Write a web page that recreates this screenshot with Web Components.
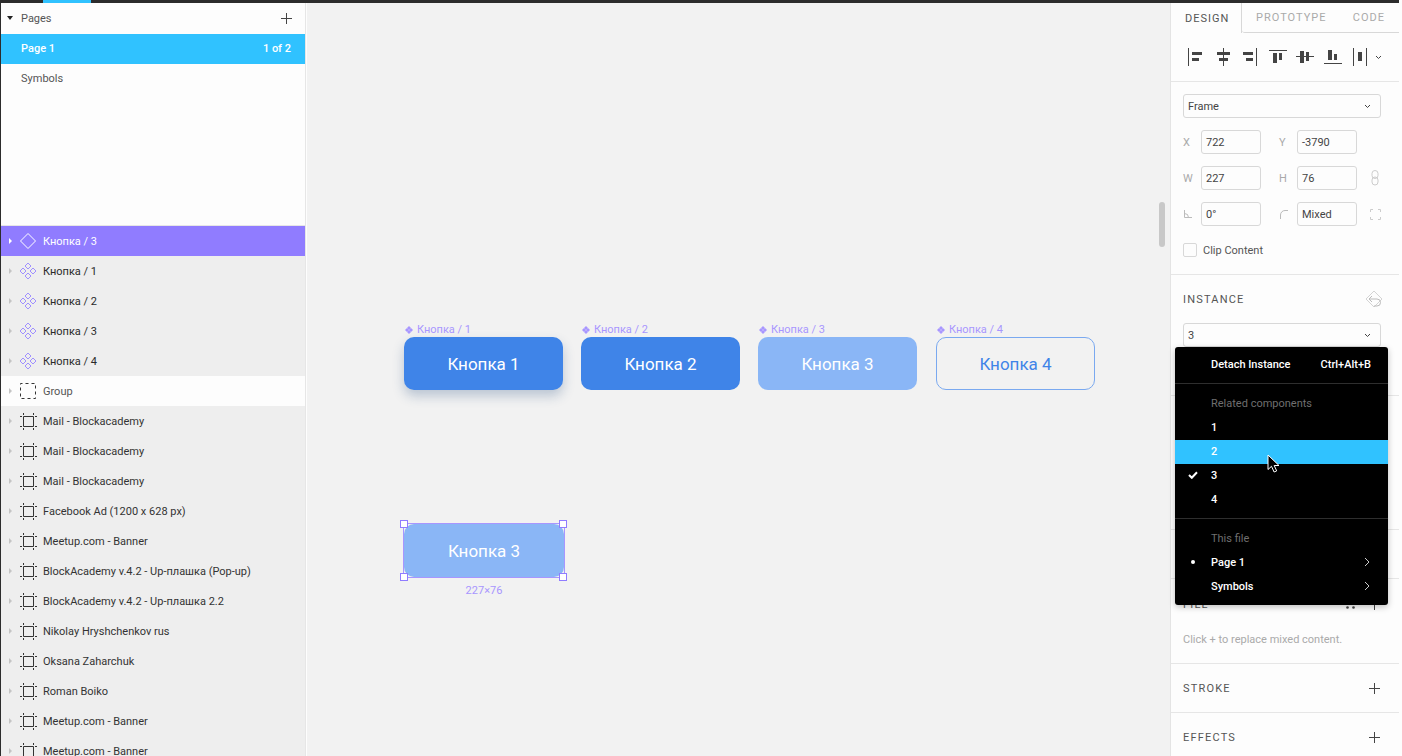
<!DOCTYPE html>
<html>
<head>
<meta charset="utf-8">
<title>Instance menu</title>
<style>
    html, body { margin: 0; height: 100%; overflow: hidden; background: #fdfdfd; }
    body { font-family: Roboto, "Liberation Sans", sans-serif; font-size: 11px; color: #444; }
</style>
</head>
<body>

<fig-app>
    <fig-layers slot="left">
        <fig-page-row active count="1 of 2">Page 1</fig-page-row>
        <fig-page-row>Symbols</fig-page-row>
        <fig-layer slot="layers" icon="master" tone="selected">Кнопка / 3</fig-layer>
        <fig-layer slot="layers" icon="instance" tone="dark">Кнопка / 1</fig-layer>
        <fig-layer slot="layers" icon="instance" tone="dark">Кнопка / 2</fig-layer>
        <fig-layer slot="layers" icon="instance" tone="dark">Кнопка / 3</fig-layer>
        <fig-layer slot="layers" icon="instance" tone="dark">Кнопка / 4</fig-layer>
        <fig-layer slot="layers" icon="group" tone="white">Group</fig-layer>
        <fig-layer slot="layers" icon="frame">Mail - Blockacademy</fig-layer>
        <fig-layer slot="layers" icon="frame">Mail - Blockacademy</fig-layer>
        <fig-layer slot="layers" icon="frame">Mail - Blockacademy</fig-layer>
        <fig-layer slot="layers" icon="frame">Facebook Ad (1200 x 628 px)</fig-layer>
        <fig-layer slot="layers" icon="frame">Meetup.com - Banner</fig-layer>
        <fig-layer slot="layers" icon="frame">BlockAcademy v.4.2 - Up-плашка (Pop-up)</fig-layer>
        <fig-layer slot="layers" icon="frame">BlockAcademy v.4.2 - Up-плашка 2.2</fig-layer>
        <fig-layer slot="layers" icon="frame">Nikolay Hryshchenkov rus</fig-layer>
        <fig-layer slot="layers" icon="frame">Oksana Zaharchuk</fig-layer>
        <fig-layer slot="layers" icon="frame">Roman Boiko</fig-layer>
        <fig-layer slot="layers" icon="frame">Meetup.com - Banner</fig-layer>
        <fig-layer slot="layers" icon="frame">Meetup.com - Banner</fig-layer>
    </fig-layers>

    <fig-canvas slot="center">
        <fig-button label="Кнопка / 1" kind="shadow" style="left:404px;top:334px">Кнопка 1</fig-button>
        <fig-button label="Кнопка / 2" style="left:581px;top:334px">Кнопка 2</fig-button>
        <fig-button label="Кнопка / 3" kind="light" style="left:758px;top:334px">Кнопка 3</fig-button>
        <fig-button label="Кнопка / 4" kind="outline" style="left:936px;top:334px">Кнопка 4</fig-button>
        <fig-selection style="left:403px;top:520px">Кнопка 3</fig-selection>
    </fig-canvas>

    <fig-props slot="right"></fig-props>
</fig-app>

<script>
const ICONS = {
    plus: '<path d="M5.500 0v11M0 5.500h11" fill="none" stroke="#444" stroke-width="1"/>',
    master: '<path d="M9 1.500 16.500 9 9 16.500 1.500 9Z" fill="none" stroke="currentColor"/>',
    instance: '<g fill="none" stroke="#a090ff"><path d="M9 1 12 4 9 7 6 4Z"/><path d="M9 11 12 14 9 17 6 14Z"/><path d="M4 6 7 9 4 12 1 9Z"/><path d="M14 6 17 9 14 12 11 9Z"/></g>',
    group: '<path d="M1.500 1.500h15v15h-15z" fill="none" stroke="#333" stroke-dasharray="3 3" stroke-dashoffset="1"/>',
    frame: '<path d="M4.500 4.500h10v10h-10z" fill="none" stroke="#333"/><path d="M1 4.500h2M16 4.500h2M1 14.500h2M16 14.500h2M4.500 1v2M14.500 1v2M4.500 16v2M14.500 16v2" fill="none" stroke="#333"/>'
};

class FigApp extends HTMLElement {
    constructor() {
        super();
        this.attachShadow({ mode: 'open' });
        this.shadowRoot.innerHTML = `
            <style>
                :host { display: block; width: 1399px; height: 756px; overflow: hidden; }
                .bar { height: 3px; background: #2c2c2c; padding-left: 43px; }
                .bar span { display: block; width: 48px; height: 3px; background: #30c2ff; }
                .main { display: grid; grid-template-columns: 306px 1fr 229px; height: 753px; border-left: 1px solid #2c2c2c; }
            </style>
            <div class="bar"><span></span></div>
            <div class="main">
                <slot name="left"></slot>
                <slot name="center"></slot>
                <slot name="right"></slot>
            </div>
        `;
    }
}

class FigLayers extends HTMLElement {
    constructor() {
        super();
        this.attachShadow({ mode: 'open' });
        this.shadowRoot.innerHTML = `
            <style>
                :host { display: block; background: #fdfdfd; border-right: 1px solid #e6e6e6; height: 753px; overflow: hidden; width: 304px; }
                .head { display: flex; align-items: center; height: 30px; padding: 0 13px 0 6px; box-sizing: border-box; }
                .caret { width: 0; height: 0; border-left: 3px solid transparent; border-right: 3px solid transparent; border-top: 4px solid #222; margin-right: 8px; }
                .title { flex: 1; color: #555; }
                .pages { padding-top: 1px; box-sizing: border-box; border-bottom: 1px solid #e6e6e6; height: 193px; }
                svg { display: block; }
            </style>
            <div class="head">
                <span class="caret"></span>
                <span class="title">Pages</span>
                <svg width="11" height="11" viewBox="0 0 11 11">${ICONS.plus}</svg>
            </div>
            <div class="pages"><slot></slot></div>
            <slot name="layers"></slot>
        `;
    }
}

class FigPageRow extends HTMLElement {
    constructor() {
        super();
        this.attachShadow({ mode: 'open' });
        const count = this.getAttribute('count') || '';
        this.shadowRoot.innerHTML = `
            <style>
                :host { display: flex; align-items: center; justify-content: space-between; box-sizing: border-box; height: 30px; padding: 0 14px 2px 20px; color: #555; }
                :host([active]) { background: #30c2ff; color: #fff; font-weight: 500; }
            </style>
            <slot></slot><span>${count}</span>
        `;
    }
}

class FigLayer extends HTMLElement {
    constructor() {
        super();
        this.attachShadow({ mode: 'open' });
        const icon = this.getAttribute('icon');
        this.shadowRoot.innerHTML = `
            <style>
                :host { display: flex; align-items: center; height: 30px; background: #eeeeee; color: #333; }
                :host([tone="selected"]) { background: #907cff; color: #fff; }
                :host([tone="white"]) { background: #fdfdfd; color: #555; }
                :host([tone="dark"]) { color: #2a2a2a; }
                .tri { width: 0; height: 0; margin: 0 0 0 8px; border-top: 3px solid transparent; border-bottom: 3px solid transparent; border-left: 3px solid #c4c4c4; }
                :host([tone="selected"]) .tri { border-left-color: #fff; }
                svg { margin: 0 6px 0 7px; display: block; }
            </style>
            <span class="tri"></span>
            <svg width="18" height="18" viewBox="0 0 18 18">${ICONS[icon]}</svg>
            <slot></slot>
        `;
    }
}

class FigCanvas extends HTMLElement {
    constructor() {
        super();
        this.attachShadow({ mode: 'open' });
        this.shadowRoot.innerHTML = `
            <style>
                :host { display: block; position: relative; background: #f2f2f2; height: 753px; overflow: hidden; }
                .layer { position: absolute; left: -307px; top: -3px; width: 1402px; height: 756px; }
                .thumb { position: absolute; right: 5px; top: 199px; width: 6px; height: 45px; border-radius: 3px; background: #c8c8c8; }
            </style>
            <div class="layer"><slot></slot></div>
            <div class="thumb"></div>
        `;
    }
}

class FigButton extends HTMLElement {
    constructor() {
        super();
        this.attachShadow({ mode: 'open' });
        const label = this.getAttribute('label');
        this.shadowRoot.innerHTML = `
            <style>
                :host { display: block; position: absolute; width: 159px; height: 56px; }
                .tag { position: absolute; left: 1px; top: -11px; display: flex; align-items: center; gap: 4px; height: 13px; color: #a896ff; font-size: 11px; white-space: nowrap; }
                svg { display: block; }
                .btn { margin-top: 3px; height: 53px; border-radius: 10px; background: #3f84e8; color: #fff; font-size: 17px; display: flex; align-items: center; justify-content: center; box-sizing: border-box; }
                :host([kind="shadow"]) .btn { box-shadow: 0 6px 12px rgba(40, 80, 130, .28); }
                :host([kind="light"]) .btn { background: #8ab6f6; }
                :host([kind="outline"]) .btn { background: transparent; color: #3f84e8; border: 1px solid #7aa9f0; }
            </style>
            <div class="tag"><svg width="8" height="8" viewBox="0 0 8 8"><g fill="#a896ff"><path d="M4 0 6 2 4 4 2 2Z"/><path d="M4 4 6 6 4 8 2 6Z"/><path d="M2 2 4 4 2 6 0 4Z"/><path d="M6 2 8 4 6 6 4 4Z"/></g></svg>${label}</div>
            <div class="btn"><slot></slot></div>
        `;
    }
}

class FigSelection extends HTMLElement {
    constructor() {
        super();
        this.attachShadow({ mode: 'open' });
        this.shadowRoot.innerHTML = `
            <style>
                :host { display: block; position: absolute; width: 162px; height: 55px; box-sizing: border-box; border: 1px solid #a896ff; margin-top: 3px; }
                .btn { height: 100%; border-radius: 10px; background: #8ab6f6; color: #fff; font-size: 17px; display: flex; align-items: center; justify-content: center; }
                .h { position: absolute; width: 6px; height: 6px; background: #fff; border: 1px solid #907cff; }
                .size { position: absolute; left: 0; right: 0; top: 60px; text-align: center; color: #a896ff; }
            </style>
            <div class="btn"><slot></slot></div>
            <span class="h" style="left:-4px;top:-4px"></span>
            <span class="h" style="right:-3px;top:-4px"></span>
            <span class="h" style="left:-4px;bottom:-4px"></span>
            <span class="h" style="right:-3px;bottom:-4px"></span>
            <div class="size">227×76</div>
        `;
    }
}

class FigProps extends HTMLElement {
    constructor() {
        super();
        this.attachShadow({ mode: 'open' });
        const bar = 'fill="#444"';
        const line = 'stroke="#444" stroke-width="1" fill="none"';
        const aligns = [
            `<path d="M1.500 0v18" ${line}/><rect x="5" y="4" width="10" height="3" ${bar}/><rect x="5" y="10" width="7" height="3" ${bar}/>`,
            `<path d="M9.500 0v18" ${line}/><rect x="3" y="4" width="13" height="3" ${bar}/><rect x="5" y="10" width="9" height="3" ${bar}/>`,
            `<path d="M16.500 0v18" ${line}/><rect x="3" y="4" width="10" height="3" ${bar}/><rect x="6" y="10" width="7" height="3" ${bar}/>`,
            `<path d="M0 2.500h18" ${line}/><rect x="4" y="5" width="4" height="10" ${bar}/><rect x="10" y="5" width="3" height="7" ${bar}/>`,
            `<path d="M0 8.500h18" ${line}/><rect x="4" y="3" width="4" height="12" ${bar}/><rect x="10" y="4" width="3" height="9" ${bar}/>`,
            `<path d="M0 15.500h18" ${line}/><rect x="4" y="2" width="4" height="10" ${bar}/><rect x="10" y="6" width="3" height="6" ${bar}/>`,
            `<path d="M2.500 0v18M15.500 0v18" ${line}/><rect x="7" y="4" width="4" height="9" ${bar}/>`
        ].map(p => `<svg width="18" height="18" viewBox="0 0 18 18">${p}</svg>`).join('');
        const chev = '<svg class="chev" width="7" height="5" viewBox="0 0 7 5"><path d="M1 1 3.500 3.500 6 1" fill="none" stroke="#444"/></svg>';
        const plus = `<svg width="11" height="11" viewBox="0 0 11 11">${ICONS.plus}</svg>`;
        this.shadowRoot.innerHTML = `
            <style>
                :host { display: block; position: relative; height: 753px; box-sizing: border-box; background: #fdfdfd; border-left: 1px solid #e4e4e4; overflow: visible; }
                svg { display: block; flex: none; }
                .tabs { display: flex; height: 30px; letter-spacing: 1px; color: #aaa; }
                .tabs div { display: flex; align-items: center; border-bottom: 1px solid #d8d8d8; }
                .tabs .design { width: 71px; padding-left: 14px; box-sizing: border-box; color: #555; border-bottom: 0; border-right: 1px solid #d8d8d8; }
                .tabs .other { flex: 1; justify-content: space-between; padding: 0 14px 0 14px; border-bottom-left-radius: 3px; }
                .aligns { display: flex; align-items: center; height: 48px; padding-left: 16px; gap: 9px; border-bottom: 1px solid #e6e6e6; }
                .aligns svg:nth-child(3) { margin-left: -1px; }
                .aligns svg:nth-child(4) { margin-left: 2px; }
                .aligns svg:nth-child(6) { margin-left: 1px; }
                .aligns .chev { margin-left: -3px; }
                .geom { height: 193px; box-sizing: border-box; padding: 12px 18px 0 12px; border-bottom: 1px solid #e6e6e6; }
                .select { display: flex; align-items: center; justify-content: space-between; box-sizing: border-box; width: 198px; height: 24px; padding: 0 9px 0 4px; border: 1px solid #d8d8d8; border-radius: 3px; background: #fdfdfd; color: #444; }
                .row { display: flex; align-items: center; height: 24px; margin-top: 12px; }
                .lbl { width: 18px; color: #aaa; flex: none; }
                .in { box-sizing: border-box; width: 60px; height: 24px; border: 1px solid #d8d8d8; border-radius: 3px; padding: 0 4px; display: flex; align-items: center; color: #444; }
                .gap { width: 18px; flex: none; }
                .after { margin-left: 12px; }
                .clip { display: flex; align-items: center; gap: 6px; margin-top: 17px; color: #555; }
                .box { width: 14px; height: 14px; box-sizing: border-box; border: 1px solid #d8d8d8; border-radius: 2px; }
                .sec { box-sizing: border-box; padding: 0 18px 0 12px; border-bottom: 1px solid #e6e6e6; }
                .title { display: flex; align-items: center; justify-content: space-between; color: #555; letter-spacing: 1.2px; }
                .instance { height: 121px; padding-top: 16px; }
                .instance .title { height: 16px; }
                .instance .title svg { margin-right: -2px; }
                .instance .select { margin-top: 16px; }
                .blank1 { height: 134px; }
                .blank2 { height: 49px; }
                .fill { height: 85px; padding-top: 18px; position: relative; }
                .fill .title { height: 14px; padding-right: 1px; }
                .fill .tools { display: flex; align-items: center; gap: 14px; }
                .fill p { margin: 22px 0 0; color: #aaa; }
                .simple { height: 49px; display: block; }
                .simple .title { height: 49px; padding-right: 1px; }
            </style>
            <div class="tabs">
                <div class="design">DESIGN</div>
                <div class="other"><span>PROTOTYPE</span><span>CODE</span></div>
            </div>
            <div class="aligns">${aligns}${chev}</div>
            <div class="geom">
                <div class="select">Frame ${chev}</div>
                <div class="row"><span class="lbl">X</span><span class="in">722</span><span class="gap"></span><span class="lbl">Y</span><span class="in">-3790</span></div>
                <div class="row"><span class="lbl">W</span><span class="in">227</span><span class="gap"></span><span class="lbl">H</span><span class="in">76</span>
                    <svg class="after" width="12" height="16" viewBox="0 0 12 16"><rect x="3" y=".5" width="6" height="8" rx="3" fill="none" stroke="#ccc"/><rect x="3" y="7" width="6" height="8" rx="3" fill="none" stroke="#ccc"/></svg></div>
                <div class="row"><span class="lbl"><svg width="10" height="10" viewBox="0 0 10 10"><path d="M1.500 1v7.500H9M1.500 4.500a4 4 0 0 1 4 4" fill="none" stroke="#bbb"/></svg></span><span class="in">0°</span><span class="gap"></span><span class="lbl"><svg width="10" height="10" viewBox="0 0 10 10"><path d="M1.500 10V6a4.500 4.500 0 0 1 4.500-4.500h3" fill="none" stroke="#bbb"/></svg></span><span class="in">Mixed</span>
                    <svg class="after" style="margin-left:13px" width="11" height="11" viewBox="0 0 11 11"><path d="M.5 3V.5H3M8 .5h2.500V3M10.500 8v2.500H8M3 10.500H.5V8" fill="none" stroke="#ccc"/></svg></div>
                <div class="clip"><span class="box"></span>Clip Content</div>
            </div>
            <div class="sec instance">
                <div class="title">INSTANCE
                    <svg width="18" height="18" viewBox="0 0 18 18"><path d="M9 1 17 9 9 17 1 9Z" fill="none" stroke="#d4d4d4"/><path d="M7 6 4 9 7 12M4 9h8a3.500 3.500 0 0 1 0 7H9" fill="none" stroke="#bbb"/></svg>
                </div>
                <div class="select">3 ${chev}</div>
            </div>
            <div class="sec blank1"></div>
            <div class="sec blank2"></div>
            <div class="sec fill">
                <div class="title">FILL
                    <span class="tools"><svg width="9" height="9" viewBox="0 0 9 9"><g fill="#444"><circle cx="1.500" cy="1.500" r="1.300"/><circle cx="7.500" cy="1.500" r="1.300"/><circle cx="1.500" cy="7.500" r="1.300"/><circle cx="7.500" cy="7.500" r="1.300"/></g></svg>${plus}</span>
                </div>
                <p>Click + to replace mixed content.</p>
            </div>
            <div class="sec simple"><div class="title">STROKE ${plus}</div></div>
            <div class="sec simple" style="border:0"><div class="title">EFFECTS ${plus}</div></div>
            <fig-menu></fig-menu>
        `;
    }
}

class FigMenu extends HTMLElement {
    constructor() {
        super();
        this.attachShadow({ mode: 'open' });
        this.shadowRoot.innerHTML = `
            <style>
                :host { display: block; position: absolute; left: 4px; top: 344px; width: 213px; height: 258px; padding-top: 5px; box-sizing: border-box; background: #000; color: #fff; border-radius: 3px; box-shadow: 0 2px 6px rgba(0,0,0,.25); font-weight: 500; }
                .it { display: flex; align-items: center; height: 24px; padding: 0 7px 0 36px; position: relative; }
                .it b { font-weight: 500; margin-left: auto; padding-right: 10px; }
                .it .mark { position: absolute; left: 13px; top: 8px; }
                .it svg.arr { margin-left: auto; margin-right: 11px; }
                .muted { color: #6f6f6f; font-weight: 400; }
                .on { background: #30c2ff; box-sizing: border-box; margin: 1px 0 -1px; padding-bottom: 2px; }
                hr { border: 0; border-top: 1px solid #2e2e2e; margin: 7px 0 7px; }
                .dot { position: absolute; left: 16px; top: 10px; width: 4px; height: 4px; border-radius: 50%; background: #fff; }
                .cursor { position: absolute; left: 92px; top: 107px; }
            </style>
            <div class="it" style="justify-content:space-between">Detach Instance<b>Ctrl+Alt+B</b></div>
            <hr>
            <div class="it muted">Related components</div>
            <div class="it">1</div>
            <div class="it on">2</div>
            <div class="it"><svg class="mark" width="10" height="8" viewBox="0 0 10 8"><path d="M1 4 3.800 6.800 9 1.200" fill="none" stroke="#fff" stroke-width="2"/></svg>3</div>
            <div class="it">4</div>
            <hr>
            <div class="it muted">This file</div>
            <div class="it"><span class="dot"></span>Page 1<svg class="arr" width="6" height="10" viewBox="0 0 6 10"><path d="M1 1 5 5 1 9" fill="none" stroke="#ccc"/></svg></div>
            <div class="it">Symbols<svg class="arr" width="6" height="10" viewBox="0 0 6 10"><path d="M1 1 5 5 1 9" fill="none" stroke="#ccc"/></svg></div>
            <svg class="cursor" width="13" height="19" viewBox="0 0 13 19"><path d="M1 1v14.500l3.500-3.200 2.600 5.700 2.600-1.100-2.500-5.400H12Z" fill="#000" stroke="#fff"/></svg>
        `;
    }
}

customElements.define('fig-app', FigApp);
customElements.define('fig-layers', FigLayers);
customElements.define('fig-page-row', FigPageRow);
customElements.define('fig-layer', FigLayer);
customElements.define('fig-canvas', FigCanvas);
customElements.define('fig-button', FigButton);
customElements.define('fig-selection', FigSelection);
customElements.define('fig-props', FigProps);
customElements.define('fig-menu', FigMenu);
</script>
</body>
</html>
